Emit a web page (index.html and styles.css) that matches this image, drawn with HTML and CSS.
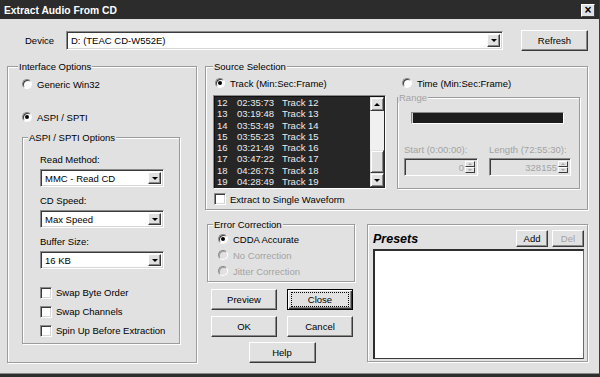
FILE: index.html
```html
<!DOCTYPE html>
<html lang="en">
<head>
    <meta charset="UTF-8">
    <title>Extract Audio From CD</title>
    <link rel="stylesheet" href="styles.css">
</head>
<body>
    <div class="dialog">
        <div class="titlebar">
            <span>Extract Audio From CD</span>
            <span class="x-btn">×</span>
        </div>

        <div class="device-row">
            <span class="device-label">Device</span>
            <div class="combo device-combo"><span class="combo-text">D: (TEAC CD-W552E)</span><span class="drop"></span></div>
            <button class="btn refresh">Refresh</button>
        </div>

        <div class="main">
            <fieldset class="grp interface">
                <legend>Interface Options</legend>
                <div class="inner">
                    <div class="opt"><span class="radio"></span>Generic Win32</div>
                    <div class="opt aspi-radio"><span class="radio on"></span>ASPI / SPTI</div>

                    <fieldset class="grp aspi-opts">
                        <legend>ASPI / SPTI Options</legend>
                        <div class="inner">
                            <div class="lbl">Read Method:</div>
                            <div class="combo sm"><span class="combo-text">MMC - Read CD</span><span class="drop"></span></div>
                            <div class="lbl next">CD Speed:</div>
                            <div class="combo sm"><span class="combo-text">Max Speed</span><span class="drop"></span></div>
                            <div class="lbl next">Buffer Size:</div>
                            <div class="combo sm"><span class="combo-text">16 KB</span><span class="drop"></span></div>

                            <div class="checks">
                                <div class="opt"><span class="check"></span>Swap Byte Order</div>
                                <div class="opt"><span class="check"></span>Swap Channels</div>
                                <div class="opt"><span class="check"></span>Spin Up Before Extraction</div>
                            </div>
                        </div>
                    </fieldset>
                </div>
            </fieldset>

            <div class="right">
                <fieldset class="grp source">
                    <legend>Source Selection</legend>
                    <div class="inner">
                        <div class="source-grid">
                            <div class="col">
                                <div class="opt track-radio"><span class="radio on"></span>Track (Min:Sec:Frame)</div>
                                <div class="listbox">
                                    <div class="rows">
                                        <div class="row"><span class="n">12</span><span class="t">02:35:73</span><span>Track 12</span></div>
                                        <div class="row"><span class="n">13</span><span class="t">03:19:48</span><span>Track 13</span></div>
                                        <div class="row"><span class="n">14</span><span class="t">03:53:49</span><span>Track 14</span></div>
                                        <div class="row"><span class="n">15</span><span class="t">03:55:23</span><span>Track 15</span></div>
                                        <div class="row"><span class="n">16</span><span class="t">03:21:49</span><span>Track 16</span></div>
                                        <div class="row"><span class="n">17</span><span class="t">03:47:22</span><span>Track 17</span></div>
                                        <div class="row"><span class="n">18</span><span class="t">04:26:73</span><span>Track 18</span></div>
                                        <div class="row"><span class="n">19</span><span class="t">04:28:49</span><span>Track 19</span></div>
                                    </div>
                                    <div class="scrollbar">
                                        <span class="sb-btn"><span class="arrow up"></span></span>
                                        <span class="sb-track"></span>
                                        <span class="sb-thumb"></span>
                                        <span class="sb-btn"><span class="arrow down"></span></span>
                                    </div>
                                </div>
                            </div>
                            <div class="col">
                                <div class="opt time-radio"><span class="radio"></span>Time (Min:Sec:Frame)</div>
                                <fieldset class="grp range">
                                    <legend class="dis">Range</legend>
                                    <div class="inner">
                                        <div class="slider"></div>
                                        <div class="range-labels dis">
                                            <span>Start (0:00:00):</span>
                                            <span>Length (72:55:30):</span>
                                        </div>
                                        <div class="range-fields">
                                            <div class="spin"><span class="spin-val">0</span><span class="spin-btns"><span><span class="arrow up dim"></span></span><span><span class="arrow down dim"></span></span></span></div>
                                            <div class="spin"><span class="spin-val">328155</span><span class="spin-btns"><span><span class="arrow up dim"></span></span><span><span class="arrow down dim"></span></span></span></div>
                                        </div>
                                    </div>
                                </fieldset>
                            </div>
                        </div>
                        <div class="opt single-check"><span class="check"></span>Extract to Single Waveform</div>
                    </div>
                </fieldset>

                <div class="lower">
                    <div class="lower-left">
                        <fieldset class="grp errcorr">
                            <legend>Error Correction</legend>
                            <div class="inner">
                                <div class="opt"><span class="radio on"></span>CDDA Accurate</div>
                                <div class="opt dis"><span class="radio off"></span>No Correction</div>
                                <div class="opt dis"><span class="radio off"></span>Jitter Correction</div>
                            </div>
                        </fieldset>
                        <div class="buttons">
                            <button class="btn">Preview</button>
                            <button class="btn default"><span class="focus">Close</span></button>
                            <button class="btn">OK</button>
                            <button class="btn">Cancel</button>
                            <button class="btn help">Help</button>
                        </div>
                    </div>

                    <div class="presets">
                        <div class="presets-head">
                            <span class="presets-title">Presets</span>
                            <button class="btn small">Add</button>
                            <button class="btn small dis">Del</button>
                        </div>
                        <div class="presets-list"></div>
                    </div>
                </div>
            </div>
        </div>
    </div>
</body>
</html>
```

FILE: styles.css
```css
* {
    box-sizing: border-box;
}

body {
    margin: 0;
    background-color: #e1e1e1;
    font-family: "Liberation Sans", Arial, sans-serif;
    font-size: 9.5px;
    color: #000;
}

.dialog {
    width: 600px;
    height: 377px;
    display: flex;
    flex-direction: column;
    background-color: #e1e1e1;
    border-right: 1px solid #3a3a3a;
    border-bottom: 3px solid #2e2e2e;
    box-shadow: inset 0 -1px #8a8a8a;
    overflow: hidden;
}

/* title bar */
.titlebar {
    height: 19px;
    display: flex;
    align-items: center;
    padding: 2px 4px 0 4px;
    background-color: #2c2c2c;
    color: #fff;
    font-weight: bold;
    font-size: 10.3px;
}

.x-btn {
    margin-left: auto;
    width: 14px;
    height: 13px;
    background-color: #e1e1e1;
    border: 1px solid;
    border-color: #fff #404040 #404040 #fff;
    color: #000;
    font-size: 12px;
    line-height: 10px;
    text-align: center;
}

/* buttons */
.btn {
    font: inherit;
    color: #000;
    background-color: #e1e1e1;
    border: 1px solid;
    border-color: #fff #3a3a3a #3a3a3a #fff;
    box-shadow: inset -1px -1px #8a8a8a;
    padding: 0;
    height: 21px;
}

.btn.default {
    border-color: #000;
    box-shadow: inset 1px 1px #fff, inset -1px -1px #3a3a3a, inset -2px -2px #8a8a8a;
}

.btn .focus {
    display: inline-block;
    outline: 1px dotted #000;
    width: 56px;
    height: 13px;
    line-height: 13px;
}

.btn.dis {
    color: #a3a3a3;
}

/* device row */
.device-row {
    display: flex;
    align-items: center;
    height: 21px;
    margin-top: 11px;
    padding-left: 25px;
}

.device-label {
    width: 41px;
}

.device-combo {
    width: 437px;
    height: 19px;
    margin-right: 18px;
}

.refresh {
    width: 67px;
}

/* combo boxes */
.combo {
    display: flex;
    align-items: center;
    background-color: #fff;
    border: 1px solid;
    border-color: #8a8a8a #fff #fff #8a8a8a;
    box-shadow: inset 1px 1px #3a3a3a, inset -1px -1px #d6d6d6;
    padding: 2px;
}

.combo-text {
    padding-left: 2px;
}

.drop {
    margin-left: auto;
    width: 13px;
    height: 100%;
    background-color: #e1e1e1;
    border: 1px solid;
    border-color: #fff #3a3a3a #3a3a3a #fff;
    box-shadow: inset -1px -1px #8a8a8a;
    display: flex;
    align-items: center;
    justify-content: center;
}

.drop::after {
    content: "";
    border-left: 3px solid transparent;
    border-right: 3px solid transparent;
    border-top: 3px solid #000;
}

.combo.sm {
    width: 124px;
    height: 18px;
}

/* group boxes */
.grp {
    margin: 0;
    padding: 0;
    min-width: 0;
    border: 1px solid #9c9c9c;
    box-shadow: inset 1px 1px #fff, 1px 1px #fff;
}

legend {
    padding: 0 1px;
    line-height: 11px;
    background-color: #e1e1e1;
}

.dis {
    color: #a3a3a3;
}

.opt {
    display: flex;
    align-items: center;
    height: 12px;
    white-space: nowrap;
}

.radio {
    width: 10px;
    height: 10px;
    margin-right: 5px;
    border-radius: 50%;
    background-color: #fff;
    border: 1px solid;
    border-color: #8a8a8a #fff #fff #8a8a8a;
    box-shadow: inset 1px 1px #3a3a3a;
    display: flex;
    align-items: center;
    justify-content: center;
}

.radio.on::after {
    content: "";
    width: 4px;
    height: 4px;
    border-radius: 50%;
    background-color: #000;
}

.radio.off {
    background-color: #e1e1e1;
    box-shadow: inset 1px 1px #a3a3a3;
}

.check {
    width: 12px;
    height: 12px;
    margin-right: 4px;
    background-color: #fff;
    border: 1px solid;
    border-color: #8a8a8a #fff #fff #8a8a8a;
    box-shadow: inset 1px 1px #3a3a3a, inset -1px -1px #d6d6d6;
}

/* main layout */
.main {
    display: flex;
    align-items: flex-start;
    margin-top: 10px;
    padding-left: 7px;
}

.interface {
    width: 190px;
    height: 302px;
}

.interface > legend {
    margin-left: 10px;
}

.interface > .inner {
    padding: 6px 0 0 14px;
}

.aspi-radio {
    margin-top: 21px;
}

.aspi-opts {
    width: 158px;
    height: 212px;
    margin-top: 9px;
}

.aspi-opts > legend {
    margin-left: 5px;
}

.aspi-opts > .inner {
    padding: 11px 0 0 17px;
}

.lbl {
    height: 12px;
    line-height: 12px;
    margin-bottom: 3px;
}

.lbl.next {
    margin-top: 8px;
}

.checks {
    display: flex;
    flex-direction: column;
    gap: 6px;
    margin-top: 17px;
}

.checks .opt {
    height: 13px;
}

.right {
    width: 383px;
    margin-left: 8px;
    display: flex;
    flex-direction: column;
}

.source {
    height: 149px;
}

.source > legend {
    margin-left: 7px;
}

.source > .inner {
    padding: 5px 0 0 7px;
}

.source-grid {
    display: grid;
    grid-template-columns: 173px 183px;
    column-gap: 11px;
}

.track-radio {
    margin-left: 2px;
}

.time-radio {
    margin-left: 5px;
}

.listbox {
    margin-top: 6px;
    height: 94px;
    display: flex;
    background-color: #262626;
    border: 1px solid;
    border-color: #8a8a8a #fff #fff #8a8a8a;
    box-shadow: inset 1px 1px #111;
    padding: 1px 1px 1px 1px;
}

.rows {
    flex: 1;
    color: #ececec;
    padding-left: 2px;
}

.row {
    display: flex;
    height: 11.25px;
    line-height: 11.25px;
}

.row .n {
    width: 20px;
}

.row .t {
    width: 45px;
}

.scrollbar {
    width: 14px;
    display: flex;
    flex-direction: column;
}

.sb-btn,
.sb-thumb {
    background-color: #e1e1e1;
    border: 1px solid;
    border-color: #e1e1e1 #3a3a3a #3a3a3a #e1e1e1;
    box-shadow: inset 1px 1px #fff, inset -1px -1px #8a8a8a;
}

.sb-btn {
    height: 14px;
    display: flex;
    align-items: center;
    justify-content: center;
}

.sb-track {
    flex: 1;
    background-color: #f0f0f0;
}

.sb-thumb {
    height: 23px;
}

.arrow {
    border-left: 3px solid transparent;
    border-right: 3px solid transparent;
}

.arrow.up {
    border-bottom: 3px solid #000;
}

.arrow.down {
    border-top: 3px solid #000;
}

.arrow.dim {
    border-left-width: 2px;
    border-right-width: 2px;
}

.arrow.up.dim {
    border-bottom: 2px solid #a3a3a3;
}

.arrow.down.dim {
    border-top: 2px solid #a3a3a3;
}

.range {
    margin-top: 3px;
    height: 97px;
}

.range > .inner {
    padding-top: 9px;
}

.slider {
    margin-left: 13px;
    width: 153px;
    height: 12px;
    background-color: #1c1c1c;
    border: 1px solid;
    border-color: #8a8a8a #fff #fff #8a8a8a;
    box-shadow: inset 1px 0 #d0d0d0;
}

.range-labels,
.range-fields {
    display: grid;
    grid-template-columns: 74px 82px;
    column-gap: 11px;
    padding-left: 6px;
}

.range-labels {
    margin-top: 20px;
    height: 12px;
    line-height: 12px;
    white-space: nowrap;
}

.range-fields {
    margin-top: 2px;
}

.spin {
    height: 18px;
    display: flex;
    align-items: center;
    justify-content: flex-end;
    border: 1px solid;
    border-color: #8a8a8a #fff #fff #8a8a8a;
    box-shadow: inset 1px 1px #3a3a3a;
    padding: 2px 2px 2px 2px;
    color: #a3a3a3;
}

.spin-val {
    margin-right: 1px;
}

.spin-btns {
    width: 10px;
    height: 100%;
    display: flex;
    flex-direction: column;
}

.spin-btns > span {
    flex: 1;
    display: flex;
    align-items: center;
    justify-content: center;
    border: 1px solid;
    border-color: #fff #3a3a3a #3a3a3a #fff;
}

.single-check {
    margin-top: 4px;
    margin-left: 1px;
}

.lower {
    display: flex;
    align-items: flex-start;
    margin-top: 9px;
}

.lower-left {
    width: 150px;
    padding-left: 2px;
}

.errcorr {
    width: 148px;
    height: 63px;
}

.errcorr > legend {
    margin-left: 5px;
}

.errcorr > .inner {
    padding: 3px 0 0 10px;
    display: flex;
    flex-direction: column;
    gap: 4px;
}

.buttons {
    display: grid;
    grid-template-columns: 66px 66px;
    grid-auto-rows: 21px;
    column-gap: 10px;
    row-gap: 6px;
    margin-top: 7px;
    margin-left: 4px;
}

.buttons .help {
    grid-column: 1 / -1;
    justify-self: center;
    width: 67px;
    margin-top: -1px;
}

.presets {
    width: 221px;
    height: 138px;
    margin-left: 12px;
    margin-top: 5px;
    border: 1px solid #9c9c9c;
    box-shadow: inset 1px 1px #fff, 1px 1px #fff;
    padding: 2px 3px 2px 5px;
}

.presets-head {
    display: flex;
    align-items: center;
    gap: 4px;
    height: 17px;
    margin-top: 3px;
}

.presets-title {
    margin-right: auto;
    font-weight: bold;
    font-style: italic;
    font-size: 12.5px;
}

.btn.small {
    width: 32px;
    height: 17px;
}

.presets-list {
    margin-top: 2px;
    height: 110px;
    background-color: #fff;
    border-style: solid;
    border-width: 2px 1px 1px 2px;
    border-color: #2e2e2e #6a6a6a #3a3a3a #2e2e2e;
}
```
